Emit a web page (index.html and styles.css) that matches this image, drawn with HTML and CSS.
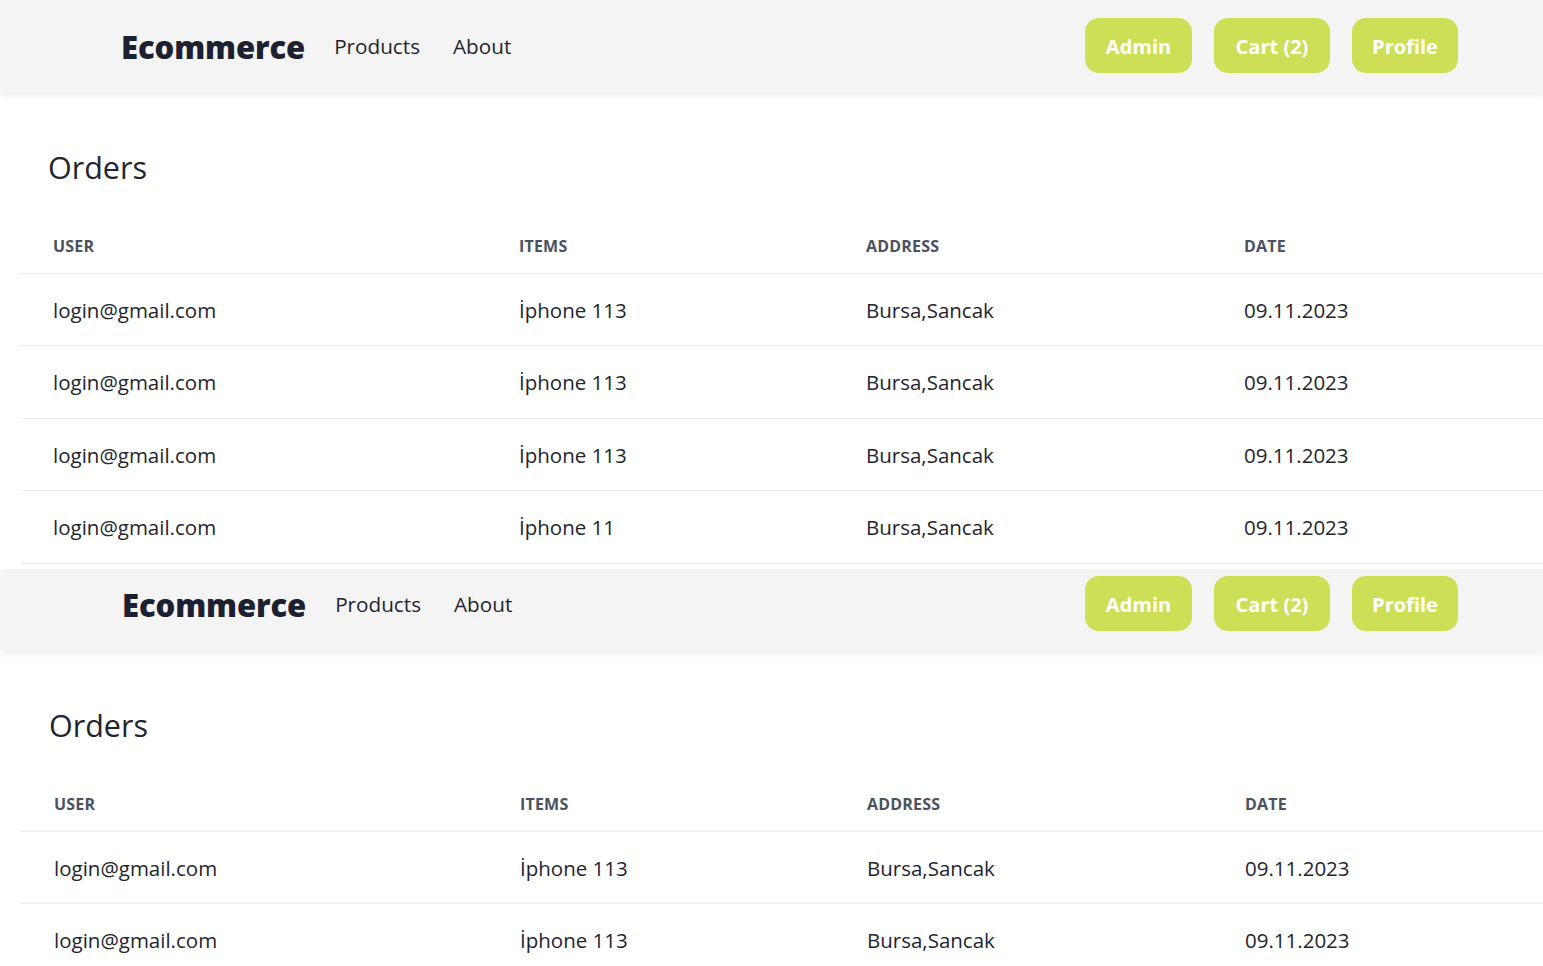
FILE: index.html
```html
<!DOCTYPE html>
<html lang="tr">
<head>
<meta charset="utf-8">
<title>Ecommerce - Orders</title>
<link rel="stylesheet" href="styles.css">
</head>
<body>
<div class="shot shot-first">
  <div class="page">
    <header class="navbar">
      <div class="nav-left">
        <a class="logo" href="#">Ecommerce</a>
        <a class="nav-link" href="#">Products</a>
        <a class="nav-link" href="#">About</a>
      </div>
      <div class="nav-right">
        <a class="btn btn-admin" href="#">Admin</a>
        <a class="btn btn-cart" href="#">Cart (2)</a>
        <a class="btn btn-profile" href="#">Profile</a>
      </div>
    </header>
    <main class="content">
      <h1 class="title">Orders</h1>
      <table class="orders">
        <colgroup><col class="c-user"><col class="c-items"><col class="c-addr"><col class="c-date"></colgroup>
        <thead><tr><th>User</th><th>Items</th><th>Address</th><th>Date</th></tr></thead>
        <tbody>
          <tr><td>login@gmail.com</td><td>İphone 113</td><td>Bursa,Sancak</td><td>09.11.2023</td></tr>
          <tr><td>login@gmail.com</td><td>İphone 113</td><td>Bursa,Sancak</td><td>09.11.2023</td></tr>
          <tr><td>login@gmail.com</td><td>İphone 113</td><td>Bursa,Sancak</td><td>09.11.2023</td></tr>
          <tr><td>login@gmail.com</td><td>İphone 11</td><td>Bursa,Sancak</td><td>09.11.2023</td></tr>
        </tbody>
      </table>
    </main>
  </div>
</div>
<div class="shot shot-second">
  <div class="page">
    <header class="navbar">
      <div class="nav-left">
        <a class="logo" href="#">Ecommerce</a>
        <a class="nav-link" href="#">Products</a>
        <a class="nav-link" href="#">About</a>
      </div>
      <div class="nav-right">
        <a class="btn btn-admin" href="#">Admin</a>
        <a class="btn btn-cart" href="#">Cart (2)</a>
        <a class="btn btn-profile" href="#">Profile</a>
      </div>
    </header>
    <main class="content">
      <h1 class="title">Orders</h1>
      <table class="orders">
        <colgroup><col class="c-user"><col class="c-items"><col class="c-addr"><col class="c-date"></colgroup>
        <thead><tr><th>User</th><th>Items</th><th>Address</th><th>Date</th></tr></thead>
        <tbody>
          <tr><td>login@gmail.com</td><td>İphone 113</td><td>Bursa,Sancak</td><td>09.11.2023</td></tr>
          <tr><td>login@gmail.com</td><td>İphone 113</td><td>Bursa,Sancak</td><td>09.11.2023</td></tr>
        </tbody>
      </table>
    </main>
  </div>
</div>
</body>
</html>
```

FILE: styles.css
```css
* { box-sizing: border-box; }
html, body { margin: 0; padding: 0; background: #ffffff; }
body {
  font-family: "Open Sans", "Noto Sans", "DejaVu Sans", sans-serif;
  color: #1f2430;
  overflow: hidden;
  height: 966px;
}
a { text-decoration: none; color: inherit; }

.shot { overflow: hidden; position: relative; }
.shot-first { height: 569px; z-index: 2; background: #fff; }
.shot-second { height: 397px; }
.shot-second .page { margin-top: -11px; margin-left: 1px; }

.navbar {
  height: 93px;
  background: #f4f4f4;
  box-shadow: 0 3px 6px rgba(0, 0, 0, 0.07);
  display: flex;
  align-items: center;
  justify-content: space-between;
  padding: 0 85px 0 121px;
  position: relative;
}
.nav-left { display: flex; align-items: center; }
.logo {
  font-size: 31px;
  font-weight: 800;
  color: #1b2130;
  margin-right: 29px;
  letter-spacing: -0.1px;
}
.nav-link {
  font-size: 20.7px;
  color: #1f2430;
  margin-right: 33px;
  margin-top: -2px;
}
.nav-right { display: flex; align-items: center; gap: 22px; margin-top: -3px; }
.btn {
  display: flex;
  align-items: center;
  justify-content: center;
  height: 55px;
  padding: 2px 20px 0;
  border-radius: 14px;
  background: #cddf57;
  color: #ffffff;
  font-size: 20px;
  font-weight: 700;
}
.btn-admin { width: 107px; }
.btn-cart { width: 116px; }
.btn-profile { width: 106px; }

.content { padding: 52px 0 0 20px; }
.title {
  margin: 0 0 30px 28px;
  font-size: 30.5px;
  font-weight: 400;
  line-height: 44px;
  color: #1f2430;
}
.orders {
  width: 1523px;
  border-collapse: collapse;
  table-layout: fixed;
}
.c-user { width: 466px; }
.c-items { width: 347px; }
.c-addr { width: 378px; }
.c-date { width: 332px; }
.orders th {
  text-align: left;
  text-transform: uppercase;
  font-size: 16px;
  font-weight: 700;
  color: #4a5262;
  height: 54px;
  padding: 0 0 0 33px;
  border-bottom: 1px solid #ececec;
  letter-spacing: 0.2px;
}
.orders td {
  font-size: 20.5px;
  height: 72.5px;
  padding: 1px 0 0 33px;
  border-bottom: 1px solid #ececec;
  color: #1f2430;
}
```
